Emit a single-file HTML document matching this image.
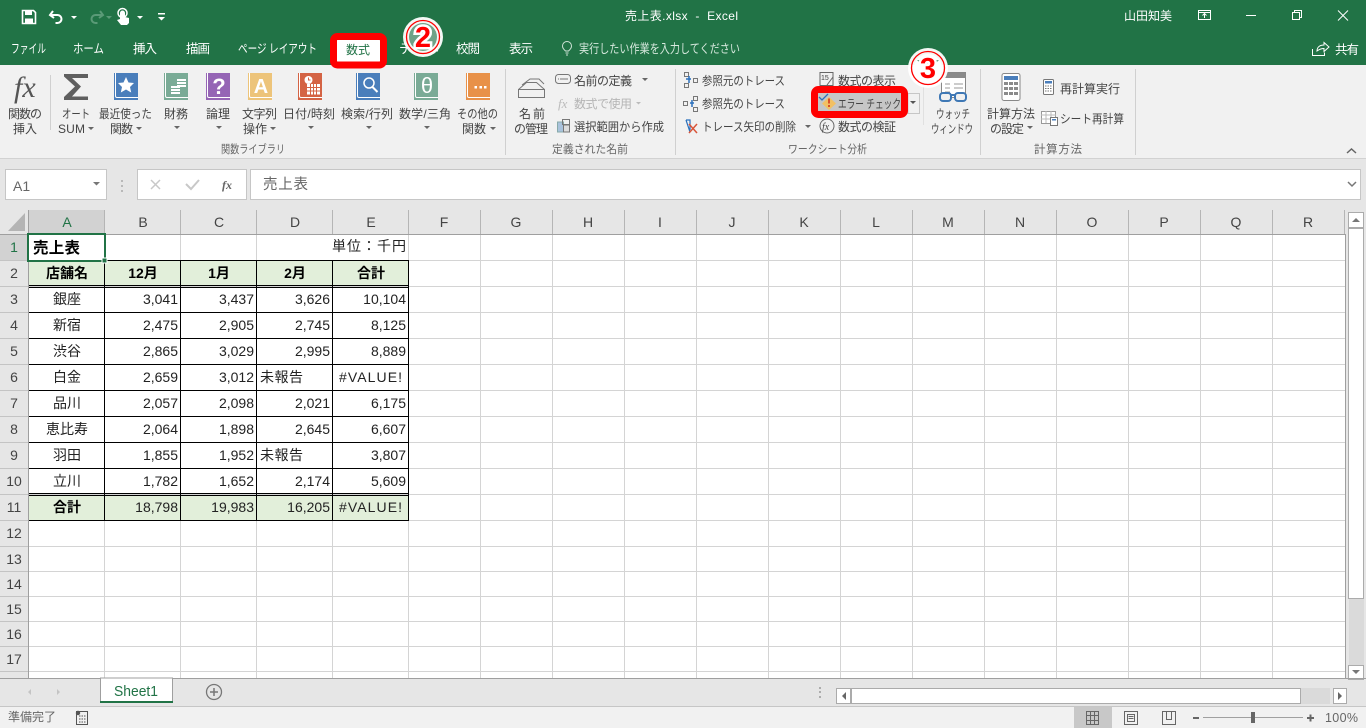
<!DOCTYPE html>
<html lang="ja"><head><meta charset="utf-8"><title>売上表.xlsx - Excel</title>
<style>
html,body{margin:0;padding:0;width:1366px;height:728px;overflow:hidden;background:#fff}
svg{display:block;font-family:"Liberation Sans","Noto Sans CJK JP",sans-serif}
.rb{font-size:12px;fill:#444}
.gl{font-size:11.5px;fill:#666}
.tab{font-size:12.5px;fill:#fff}
.c{font-size:14px;fill:#222}
.h{font-size:14px;fill:#444}
</style></head><body>
<svg width="1366" height="728" viewBox="0 0 1366 728" xmlns="http://www.w3.org/2000/svg">
<!-- backgrounds -->
<rect width="1366" height="65" fill="#217346"/>
<rect y="65" width="1366" height="93" fill="#f1f1f1"/>
<rect y="158" width="1366" height="1" fill="#d2d2d2"/>
<rect y="159" width="1366" height="51" fill="#e6e6e6"/>
<rect y="210" width="1366" height="469" fill="#e6e6e6"/>
<rect x="29" y="235" width="1316" height="443" fill="#fff"/>
<rect y="679" width="1366" height="28" fill="#e6e6e6"/>
<rect y="706" width="1366" height="1" fill="#c6c6c6"/>
<rect y="707" width="1366" height="21" fill="#f1f1f1"/>

<!-- QAT -->
<g fill="none" stroke="#fff">
<path d="M22.5 10.5h11l2 2v11h-13z" stroke-width="1.6"/>
<rect x="25" y="11" width="7" height="4" fill="#fff" stroke="none"/>
<rect x="25" y="18.5" width="8" height="5" fill="#fff" stroke="none"/>
<path d="M53 11l-3 4 4 3M50.5 15h7a4 4 0 0 1 0 8h-2" stroke-width="2"/>
<path d="M100 11l3 4-4 3M102.500 15h-7a4 4 0 0 0 0 8h2" stroke-width="2" stroke="#5a9a77"/>
</g>
<path d="M71 16h6l-3 3z" fill="#fff"/><path d="M106 16h6l-3 3z" fill="#5a9a77"/>
<path d="M137 16h6l-3 3zM158 17h7l-3.500 3.500z" fill="#fff"/><rect x="158" y="13" width="7" height="1.500" fill="#fff"/>
<path d="M120 19v-6a2.500 2.500 0 0 1 5 0v4l4 1v5l-2 2h-6l-4-5z" fill="#fff"/><circle cx="122.500" cy="13" r="4.500" fill="none" stroke="#fff" stroke-width="1.500"/>

<!-- title -->
<text x="625" y="20" font-size="12" fill="#fff" textLength="113" lengthAdjust="spacing" xml:space="preserve">売上表.xlsx  -  Excel</text>
<text x="1124" y="20" font-size="12" fill="#fff" textLength="48">山田知美</text>
<g fill="none" stroke="#fff" stroke-width="1">
<rect x="1198.500" y="10.500" width="12" height="9"/><path d="M1198.500 12.500h12M1204.500 18v-4M1202.500 15.500l2-2 2 2"/>
<path d="M1246 15.500h10"/>
<rect x="1292.500" y="12.500" width="7" height="7"/><path d="M1294.500 12.500v-2h7v7h-2"/>
<path d="M1338 10.500l10 10M1348 10.500l-10 10"/>
<path d="M1312.500 49v6.500h12v-3M1317 51c0-4 3-6 7-6v-2.500l5 4.500-5 4.500v-3c-3 0-5 1-7 2.500z"/>
</g>
<text x="1335" y="54" class="tab" textLength="24">共有</text>

<!-- tabs -->
<rect x="333.500" y="36.500" width="50" height="28.500" rx="4" fill="#fff" stroke="#f00" stroke-width="7"/>
<text x="11" y="53" class="tab" textLength="35" lengthAdjust="spacingAndGlyphs">ファイル</text>
<text x="73" y="53" class="tab" textLength="31" lengthAdjust="spacingAndGlyphs">ホーム</text>
<text x="133" y="53" class="tab" textLength="24">挿入</text>
<text x="186" y="53" class="tab" textLength="24">描画</text>
<text x="238" y="53" class="tab" textLength="79" lengthAdjust="spacingAndGlyphs">ページ レイアウト</text>
<text x="346" y="54" font-size="12" fill="#217346" textLength="24">数式</text>
<text x="399" y="53" class="tab" textLength="42" lengthAdjust="spacingAndGlyphs">データ</text>
<text x="456" y="53" class="tab" textLength="24">校閲</text>
<text x="509" y="53" class="tab" textLength="24">表示</text>
<g fill="none" stroke="#cfe3d7" stroke-width="1"><path d="M565.500 51c-2-2-3-3-3-5a4.500 4.500 0 0 1 9 0c0 2-1 3-3 5zM565.500 53h3M566 55h2"/></g>
<text x="579" y="53" font-size="12.500" fill="#d6e8dd" textLength="161" lengthAdjust="spacingAndGlyphs">実行したい作業を入力してください</text>

<!-- ribbon separators -->
<g fill="#d0d0d0">
<rect x="50" y="75" width="1" height="55"/>
<rect x="505" y="69" width="1" height="86"/>
<rect x="675" y="69" width="1" height="86"/>
<rect x="923" y="69" width="1" height="56" fill="#e0e0e0"/>
<rect x="980" y="69" width="1" height="86"/>
<rect x="1135" y="69" width="1" height="86"/>
</g>

<!-- function library icons -->
<text x="14" y="97" font-family="Liberation Serif,serif" font-style="italic" font-size="30" fill="#555">fx</text>
<path d="M64 74H88V78H72L81 86.500L72 96.500H88V100H64V97L75 86.500L64 76.500Z" fill="#5f5f5f"/>
<g>
<rect x="114" y="73" width="24" height="27" fill="#4a7ebb"/>
<path d="M115.500 73v23a1.500 1.500 0 0 0 1.500 1.500h21" fill="none" stroke="#fff"/>
<path d="M126 77l2.500 5.500 5.500.5-4 4 1.200 5.500-5.200-3-5.200 3 1.200-5.500-4-4 5.500-.5z" fill="#fff"/>
<rect x="164" y="73" width="24" height="27" fill="#7aab96"/>
<path d="M165.500 73v23a1.500 1.500 0 0 0 1.500 1.500h21" fill="none" stroke="#fff"/>
<g fill="#fff"><rect x="171" y="86" width="9" height="2"/><rect x="171" y="89" width="9" height="2"/><rect x="171" y="92" width="9" height="2"/><rect x="177" y="79" width="9" height="2"/><rect x="177" y="82" width="9" height="2"/><rect x="177" y="85" width="9" height="2"/></g>
<rect x="206" y="73" width="24" height="27" fill="#9565b5"/>
<path d="M207.500 73v23a1.500 1.500 0 0 0 1.500 1.500h21" fill="none" stroke="#fff"/>
<text x="219" y="94" font-size="22" font-weight="bold" fill="#fff" text-anchor="middle">?</text>
<rect x="248" y="73" width="24" height="27" fill="#edc47a"/>
<path d="M249.500 73v23a1.500 1.500 0 0 0 1.500 1.500h21" fill="none" stroke="#fff"/>
<text x="261" y="93" font-size="20" font-weight="bold" fill="#fff" text-anchor="middle">A</text>
<rect x="298" y="73" width="24" height="27" fill="#d46344"/>
<path d="M299.500 73v23a1.500 1.500 0 0 0 1.500 1.500h21" fill="none" stroke="#fff"/>
<circle cx="308.500" cy="80" r="4" fill="#fff"/><path d="M308.500 77.500v2.500h2" fill="none" stroke="#d46344"/>
<rect x="307" y="84" width="13" height="10.500" fill="#fff"/>
<path d="M310.500 84v10.500M313.500 84v10.500M316.500 84v10.500M307 87.500h13M307 91h13" stroke="#d46344" stroke-width="1"/>
<rect x="356" y="73" width="24" height="27" fill="#4a7ebb"/>
<path d="M357.500 73v23a1.500 1.500 0 0 0 1.500 1.500h21" fill="none" stroke="#fff"/>
<circle cx="369" cy="83" r="5" fill="none" stroke="#fff" stroke-width="1.500"/><path d="M372.500 87l5 5" stroke="#fff" stroke-width="2"/>
<rect x="414" y="73" width="24" height="27" fill="#7aab96"/>
<path d="M415.500 73v23a1.500 1.500 0 0 0 1.500 1.500h21" fill="none" stroke="#fff"/>
<text x="427" y="93" font-size="22" fill="#fff" text-anchor="middle">θ</text>
<rect x="466" y="73" width="24" height="27" fill="#e89148"/>
<path d="M467.500 73v23a1.500 1.500 0 0 0 1.500 1.500h21" fill="none" stroke="#fff"/>
<path d="M474.500 86h2.500v2.500h-2.500zM479.500 86h2.500v2.500h-2.500zM484 86h2.500v2.500H484z" fill="#fff"/>
</g>

<!-- function library labels -->
<text x="8" y="118" class="rb" textLength="34">関数の</text><text x="13" y="133" class="rb" textLength="24">挿入</text>
<text x="62" y="118" class="rb" textLength="28" lengthAdjust="spacingAndGlyphs">オート</text><text x="58" y="133" class="rb" textLength="27">SUM</text>
<text x="99" y="118" class="rb" textLength="53" lengthAdjust="spacingAndGlyphs">最近使った</text><text x="110" y="133" class="rb" textLength="23">関数</text>
<text x="164" y="118" class="rb" textLength="24">財務</text><text x="206" y="118" class="rb" textLength="24">論理</text>
<text x="242" y="118" class="rb" textLength="35">文字列</text><text x="243" y="133" class="rb" textLength="24">操作</text>
<text x="283" y="118" class="rb" textLength="52">日付/時刻</text><text x="341" y="118" class="rb" textLength="52">検索/行列</text>
<text x="399" y="118" class="rb" textLength="52">数学/三角</text><text x="457" y="118" class="rb" textLength="41" lengthAdjust="spacingAndGlyphs">その他の</text><text x="462" y="133" class="rb" textLength="24">関数</text>
<g fill="#666"><path d="M88 127h6l-3 3zM136 127h6l-3 3zM174 126h6l-3 3zM216 126h6l-3 3zM270 127h6l-3 3zM308 126h6l-3 3zM366 126h6l-3 3zM424 126h6l-3 3zM490 127h6l-3 3zM1027 126h6l-3 3zM642 78h6l-3 3zM805 125h6l-3 3z"/><path d="M636 102h5l-2.500 2.500z" fill="#bbb"/></g>
<text x="221" y="153" class="gl" textLength="64" lengthAdjust="spacingAndGlyphs">関数ライブラリ</text>
<text x="552" y="153" class="gl" textLength="76" lengthAdjust="spacingAndGlyphs">定義された名前</text>
<text x="788" y="153" class="gl" textLength="79" lengthAdjust="spacingAndGlyphs">ワークシート分析</text>
<text x="1034" y="153" class="gl" textLength="48">計算方法</text>

<!-- defined names -->
<g fill="none" stroke="#777"><path d="M518.500 89.500l8-7h10l8 7M518.500 89.500h26v8h-26zM522 85l8-6h9l5 5"/><rect x="555.500" y="74.500" width="15" height="9" rx="3"/><path d="M560 79h8M558 79h1"/>
<rect x="557.500" y="122" width="6" height="10" fill="#a9c2dc" stroke="#8aa"/><rect x="563.500" y="125" width="6" height="7" fill="#ddd"/><rect x="562.500" y="119.500" width="7" height="5"/></g>
<text x="558" y="108" font-family="Liberation Serif,serif" font-style="italic" font-size="13" fill="#bbb">fx</text>
<text x="519" y="118" class="rb" textLength="26">名前</text><text x="514" y="133" class="rb" textLength="34">の管理</text>
<text x="574" y="85" class="rb" textLength="58">名前の定義</text>
<text x="574" y="108" class="rb" textLength="58" style="fill:#b5b5b5">数式で使用</text>
<text x="574" y="131" class="rb" textLength="90" lengthAdjust="spacingAndGlyphs">選択範囲から作成</text>

<!-- auditing -->
<g fill="none" stroke="#777"><rect x="684.500" y="72.500" width="4" height="4"/><rect x="684.500" y="83.500" width="4" height="4"/><rect x="693.500" y="78.500" width="4" height="4"/>
<rect x="683.500" y="101.500" width="4" height="4"/><rect x="693.500" y="96.500" width="4" height="4"/><rect x="693.500" y="107.500" width="4" height="4"/></g>
<path d="M686 79h5M689 76v7M690 103h4M692 100v7" stroke="#2a70bd" stroke-width="1.500" fill="none"/>
<path d="M686 120l4 12M686 120h4v10" stroke="#2a70bd" stroke-width="1.200" fill="none"/><path d="M689 124l8 9M697 124l-8 9" stroke="#d8553a" stroke-width="1.500" fill="none"/>
<text x="702" y="85" class="rb" textLength="83" lengthAdjust="spacingAndGlyphs">参照元のトレース</text>
<text x="702" y="108" class="rb" textLength="83" lengthAdjust="spacingAndGlyphs">参照先のトレース</text>
<text x="702" y="131" class="rb" textLength="94" lengthAdjust="spacingAndGlyphs">トレース矢印の削除</text>
<g fill="none" stroke="#666"><path d="M820 72.500h13v13h-13z"/><path d="M827 85l6-8"/></g>
<text x="821" y="80" font-size="7" fill="#444">15</text>
<rect x="908" y="93.500" width="11.500" height="20" fill="#f1f1f1" stroke="#c6c6c6"/>
<path d="M910 101h6l-3 3z" fill="#555"/>
<rect x="814.500" y="89.500" width="90" height="25" rx="4" fill="#c6c6c6" stroke="#f00" stroke-width="7"/>
<path d="M819 97l3 3 6-6" fill="none" stroke="#2a70bd" stroke-width="1.300"/>
<path d="M829 97l7 6.500-7 6.500-7-6.500z" fill="#f2c063"/><rect x="828" y="98.500" width="2" height="5" fill="#d9512c"/><rect x="828" y="105" width="2" height="2" fill="#d9512c"/>
<text x="838" y="108" class="rb" textLength="63" lengthAdjust="spacingAndGlyphs" xml:space="preserve">エラー チェック</text>
<text x="838" y="85" class="rb" textLength="58">数式の表示</text>
<circle cx="827" cy="126" r="7" fill="none" stroke="#666"/><text x="822" y="130" font-family="Liberation Serif,serif" font-style="italic" font-size="10" fill="#444">fx</text>
<text x="838" y="131" class="rb" textLength="58">数式の検証</text>

<!-- watch window -->
<rect x="941.500" y="72.500" width="24" height="25" fill="#fff" stroke="#888"/><rect x="942" y="73" width="23" height="5" fill="#8a8a8a"/>
<path d="M945 84h5M945 88h5M945 92h5M954 84h9M954 88h9" stroke="#999"/>
<g fill="#f1f1f1" stroke="#3f78b5" stroke-width="2"><rect x="940" y="93" width="11" height="8" rx="3"/><rect x="955" y="93" width="11" height="8" rx="3"/></g>
<path d="M951 95h4" stroke="#3f78b5" stroke-width="2"/>
<text x="936" y="118" class="rb" textLength="34" lengthAdjust="spacingAndGlyphs">ウォッチ</text>
<text x="931" y="133" class="rb" textLength="42" lengthAdjust="spacingAndGlyphs">ウィンドウ</text>

<!-- calc -->
<rect x="1002" y="73.500" width="18" height="27" rx="2" fill="#fff" stroke="#888"/><rect x="1004" y="76" width="14" height="4" fill="#4a7ebb"/>
<g fill="#8a8a8a"><rect x="1004" y="82" width="4" height="3"/><rect x="1009" y="82" width="4" height="3"/><rect x="1014" y="82" width="4" height="3"/><rect x="1004" y="87" width="4" height="3"/><rect x="1009" y="87" width="4" height="3"/><rect x="1014" y="87" width="4" height="3"/><rect x="1004" y="92" width="4" height="3"/><rect x="1009" y="92" width="4" height="3"/><rect x="1014" y="92" width="4" height="3"/></g>
<rect x="1043.500" y="79.500" width="10" height="15" rx="1" fill="#fff" stroke="#777"/><rect x="1045" y="81" width="7" height="2.500" fill="#4a7ebb"/>
<path d="M1045 86h7M1045 88.500h7M1045 91h7" stroke="#777" stroke-dasharray="1.500 1"/>
<rect x="1041.500" y="111.500" width="14" height="12" fill="#fff" stroke="#999"/><path d="M1041 115h15M1041 119h15M1046 111v12M1051 111v12" stroke="#bbb"/>
<rect x="1050.500" y="117.500" width="7" height="8" fill="#fff" stroke="#777"/><rect x="1052" y="119" width="4" height="1.500" fill="#4a7ebb"/>
<text x="987" y="118" class="rb" textLength="48">計算方法</text><text x="990" y="133" class="rb" textLength="34">の設定</text>
<text x="1060" y="93" class="rb" textLength="60">再計算実行</text><text x="1060" y="123" class="rb" textLength="64" lengthAdjust="spacingAndGlyphs">シート再計算</text>
<path d="M1347 153l4.500-4 4.500 4" fill="none" stroke="#666" stroke-width="1.500"/>

<!-- formula bar -->
<rect x="5.500" y="169.500" width="101" height="30" fill="#fff" stroke="#c6c6c6"/>
<text x="13" y="191" font-size="14" fill="#666">A1</text>
<path d="M93 182h7l-3.500 3.500z" fill="#777"/>
<path d="M122 180v2M122 185v2M122 190v2" stroke="#aaa" stroke-width="1.500"/>
<rect x="137.500" y="169.500" width="109" height="30" fill="#fff" stroke="#c6c6c6"/>
<path d="M151 180l9 9M160 180l-9 9" stroke="#c8c8c8" stroke-width="1.500"/>
<path d="M186 184l5 5 8-9" fill="none" stroke="#c8c8c8" stroke-width="2"/>
<text x="222" y="189" font-family="Liberation Serif,serif" font-style="italic" font-weight="bold" font-size="12" fill="#666">fx</text>
<rect x="250.500" y="169.500" width="1110" height="30" fill="#fff" stroke="#c6c6c6"/>
<text x="263" y="189" font-size="14.500" fill="#666" textLength="45">売上表</text>
<path d="M1348 182l4 4 4-4" fill="none" stroke="#777" stroke-width="1.500"/>

<!-- sheet headers -->
<path d="M25 213v18H8z" fill="#b4b4b4"/>
<rect x="29" y="210" width="76" height="24" fill="#d2d2d2"/>
<rect x="0" y="235" width="28" height="25" fill="#d2d2d2"/>
<path d="M104.500 210v24M180.500 210v24M256.500 210v24M332.500 210v24M408.500 210v24M480.500 210v24M552.500 210v24M624.500 210v24M696.500 210v24M768.500 210v24M840.500 210v24M912.500 210v24M984.500 210v24M1056.500 210v24M1128.500 210v24M1200.500 210v24M1272.500 210v24M1344.500 210v24" stroke="#b5b5b5"/>
<path d="M0 260.500h28M0 286.500h28M0 312.500h28M0 338.500h28M0 364.500h28M0 390.500h28M0 416.500h28M0 442.500h28M0 468.500h28M0 494.500h28M0 520.500h28M0 546.500h28M0 571.500h28M0 596.500h28M0 621.500h28M0 646.500h28M0 671.500h28" stroke="#c4c4c4"/>
<path d="M0 234.500h1345.500V678M28.500 210v468M0 678.500h1346" fill="none" stroke="#9f9f9f"/>
<g class="h" text-anchor="middle" font-size="14">
<text x="67" y="227" fill="#217346">A</text><text x="143" y="227">B</text><text x="219" y="227">C</text><text x="295" y="227">D</text><text x="371" y="227">E</text><text x="444" y="227">F</text><text x="516" y="227">G</text><text x="588" y="227">H</text><text x="660" y="227">I</text><text x="732" y="227">J</text><text x="804" y="227">K</text><text x="876" y="227">L</text><text x="948" y="227">M</text><text x="1020" y="227">N</text><text x="1092" y="227">O</text><text x="1164" y="227">P</text><text x="1236" y="227">Q</text><text x="1308" y="227">R</text>
<text x="14" y="252" fill="#217346">1</text><text x="14" y="278">2</text><text x="14" y="304">3</text><text x="14" y="330">4</text><text x="14" y="356">5</text><text x="14" y="382">6</text><text x="14" y="408">7</text><text x="14" y="434">8</text><text x="14" y="460">9</text><text x="14" y="486">10</text><text x="14" y="512">11</text><text x="14" y="538">12</text><text x="14" y="564">13</text><text x="14" y="589">14</text><text x="14" y="614">15</text><text x="14" y="639">16</text><text x="14" y="664">17</text>
</g>

<!-- gridlines -->
<path d="M29 260.500h1316M29 286.500h1316M29 312.500h1316M29 338.500h1316M29 364.500h1316M29 390.500h1316M29 416.500h1316M29 442.500h1316M29 468.500h1316M29 494.500h1316M29 520.500h1316M29 546.500h1316M29 571.500h1316M29 596.500h1316M29 621.500h1316M29 646.500h1316M29 671.500h1316" stroke="#d4d4d4"/>
<path d="M104.500 235v443M180.500 235v443M256.500 235v443M332.500 260v418M408.500 235v443M480.500 235v443M552.500 235v443M624.500 235v443M696.500 235v443M768.500 235v443M840.500 235v443M912.500 235v443M984.500 235v443M1056.500 235v443M1128.500 235v443M1200.500 235v443M1272.500 235v443" stroke="#d4d4d4"/>

<!-- table -->
<rect x="29" y="261" width="380" height="25" fill="#e2efda"/>
<rect x="29" y="495" width="380" height="25" fill="#e2efda"/>
<path d="M29 260.500h380M29 285.500h380M29 287.500h380M29 312.500h380M29 338.500h380M29 364.500h380M29 390.500h380M29 416.500h380M29 442.500h380M29 468.500h380M29 493.500h380M29 495.500h380M29 520.500h380M104.500 260v261M180.500 260v261M256.500 260v261M332.500 260v261M408.500 260v261" stroke="#000" fill="none"/>

<!-- cells -->
<text x="33" y="253" font-size="15.500" font-weight="bold" fill="#000" textLength="47">売上表</text>
<text x="332" y="251" font-size="14" fill="#222" textLength="74">単位：千円</text>
<g font-size="14" font-weight="bold" fill="#000" text-anchor="middle">
<text x="67" y="278">店舗名</text><text x="143" y="278">12月</text><text x="219" y="278">1月</text><text x="295" y="278">2月</text><text x="371" y="278">合計</text>
<text x="67" y="512">合計</text>
</g>
<g class="c" text-anchor="middle" font-size="14" fill="#222">
<text x="67" y="304">銀座</text><text x="67" y="330">新宿</text><text x="67" y="356">渋谷</text><text x="67" y="382">白金</text><text x="67" y="408">品川</text><text x="67" y="434">恵比寿</text><text x="67" y="460">羽田</text><text x="67" y="486">立川</text>
</g>
<g class="c" text-anchor="end">
<text x="178" y="304">3,041</text><text x="254" y="304">3,437</text><text x="330" y="304">3,626</text><text x="406" y="304">10,104</text>
<text x="178" y="330">2,475</text><text x="254" y="330">2,905</text><text x="330" y="330">2,745</text><text x="406" y="330">8,125</text>
<text x="178" y="356">2,865</text><text x="254" y="356">3,029</text><text x="330" y="356">2,995</text><text x="406" y="356">8,889</text>
<text x="178" y="382">2,659</text><text x="254" y="382">3,012</text>
<text x="178" y="408">2,057</text><text x="254" y="408">2,098</text><text x="330" y="408">2,021</text><text x="406" y="408">6,175</text>
<text x="178" y="434">2,064</text><text x="254" y="434">1,898</text><text x="330" y="434">2,645</text><text x="406" y="434">6,607</text>
<text x="178" y="460">1,855</text><text x="254" y="460">1,952</text><text x="406" y="460">3,807</text>
<text x="178" y="486">1,782</text><text x="254" y="486">1,652</text><text x="330" y="486">2,174</text><text x="406" y="486">5,609</text>
<text x="178" y="512">18,798</text><text x="254" y="512">19,983</text><text x="330" y="512">16,205</text>
</g>
<text x="260" y="382" class="c" textLength="43">未報告</text><text x="260" y="460" class="c" textLength="43">未報告</text>
<text x="339" y="382" class="c" textLength="63">#VALUE!</text><text x="339" y="512" class="c" textLength="63">#VALUE!</text>

<!-- selection -->
<rect x="28" y="234" width="77" height="27" fill="none" stroke="#217346" stroke-width="2"/>
<rect x="102" y="258" width="5" height="5" fill="#217346" stroke="#fff" stroke-width="1"/>

<!-- vertical scrollbar -->
<rect x="1346" y="210" width="20" height="469" fill="#e6e6e6"/>
<rect x="1348.500" y="212.500" width="15" height="15" fill="#fff" stroke="#ababab"/>
<path d="M1352 222l4-4 4 4z" fill="#777"/>
<rect x="1348.500" y="228.500" width="15" height="370" fill="#fff" stroke="#ababab"/>
<rect x="1349" y="599" width="15" height="66" fill="#dadada"/>
<rect x="1348.500" y="665.500" width="15" height="14" fill="#fff" stroke="#ababab"/>
<path d="M1352 670h8l-4 4z" fill="#777"/>

<!-- tabs bar -->
<rect x="0" y="678" width="1366" height="1" fill="#9f9f9f"/>
<path d="M31 689v6l-3-3zM57 689v6l3-3z" fill="#c4c4c4"/>
<path d="M100.500 702v-24h72v24" fill="#fff" stroke="#9f9f9f"/>
<rect x="100" y="701" width="73" height="2" fill="#217346"/>
<text x="114" y="696" font-size="14.500" fill="#217346" textLength="44" lengthAdjust="spacingAndGlyphs">Sheet1</text>
<circle cx="214" cy="692" r="7.500" fill="none" stroke="#777" stroke-width="1.300"/>
<path d="M210 692h8M214 688v8" stroke="#777" stroke-width="1.500"/>
<path d="M820 687v2M820 691v2M820 696v2" stroke="#999" stroke-width="1.500"/>
<rect x="836.500" y="688.500" width="14" height="15" fill="#fff" stroke="#ababab"/>
<path d="M846 692v8l-4-4z" fill="#666"/>
<rect x="851.500" y="688.500" width="449" height="15" fill="#fff" stroke="#ababab"/>
<rect x="1301" y="688" width="29" height="16" fill="#dadada"/>
<rect x="1333.500" y="688.500" width="13" height="15" fill="#fff" stroke="#ababab"/>
<path d="M1338 692v8l4-4z" fill="#666"/>

<!-- status bar -->
<text x="8" y="721" font-size="12" fill="#666" textLength="48">準備完了</text>
<circle cx="78" cy="713" r="2.200" fill="#555"/>
<path d="M76.500 711.500h11v13h-11z" fill="none" stroke="#555"/>
<path d="M79 716h7M79 719h7M79 722h7" stroke="#555" stroke-dasharray="1.500 1"/>
<rect x="1074" y="707" width="38" height="21" fill="#c8c8c8"/>
<g fill="none" stroke="#666">
<path d="M1086.500 711.500h12v13h-12zM1086.500 715.500h12M1086.500 720.500h12M1090.500 711.500v13M1094.500 711.500v13"/>
<path d="M1124.500 711.500h13v13h-13zM1127.500 714.500h7v7h-7zM1128.500 716.500h5M1128.500 718.500h5"/>
<path d="M1162.500 711.500h13v13h-13zM1166.500 711.500v8h5v-8"/>
</g>
<rect x="1193" y="717" width="6" height="2" fill="#666"/>
<rect x="1203" y="717" width="100" height="1" fill="#a0a0a0"/>
<rect x="1251" y="712" width="4" height="11" fill="#666"/>
<path d="M1307 718h7M1310.500 714.500v7" stroke="#666" stroke-width="2"/>
<text x="1325" y="722" font-size="12.500" fill="#666" textLength="33">100%</text>

<!-- callouts -->
<g>
<circle cx="423" cy="37" r="20" fill="#fff" opacity=".95"/>
<circle cx="423" cy="37" r="14" fill="#6fa287"/>
<circle cx="423" cy="37" r="16.500" fill="none" stroke="#f00" stroke-width="1.300"/>
<text x="423" y="47" font-size="29" font-weight="bold" fill="#f00" stroke="#fff" stroke-width="5" paint-order="stroke" text-anchor="middle">2</text>
<circle cx="928" cy="68" r="20" fill="#fff" opacity=".95"/>
<circle cx="928" cy="68" r="14" fill="#fff"/>
<path d="M917 60h22l-5 5h-12z" fill="#6fa287"/>
<circle cx="928" cy="68" r="16.500" fill="none" stroke="#f00" stroke-width="1.300"/>
<text x="928" y="78" font-size="29" font-weight="bold" fill="#f00" stroke="#fff" stroke-width="5" paint-order="stroke" text-anchor="middle">3</text>
</g>
</svg>
</body></html>
